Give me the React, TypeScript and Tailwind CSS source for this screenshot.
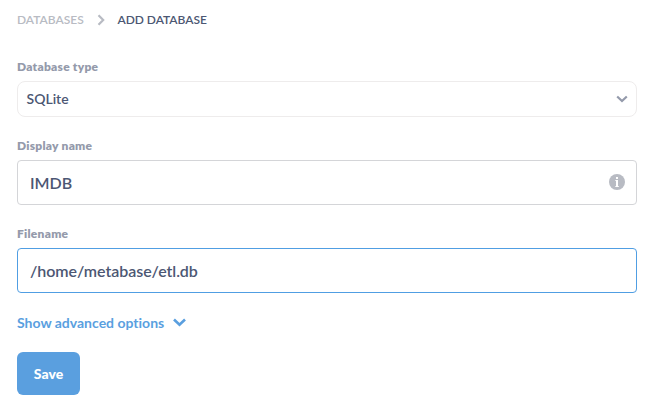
import React from "react";

function Label({ children }: { children: React.ReactNode }) {
  return <div className="text-[12px] leading-[14px] font-extrabold tracking-[0.25px] text-[#949aab]">{children}</div>;
}

export default function App() {
  return (
    <main className="h-[407px] w-[648px] overflow-hidden bg-white pl-[17px] pr-[11px] pt-[13px] font-['Lato',sans-serif] font-semibold text-[#4c5773] [font-variant-ligatures:none]">
      <nav className="flex h-[14px] items-center text-[12px] leading-[14px]">
        <span className="w-[67px] whitespace-nowrap text-[#b8bbc3]">DATABASES</span>
        <svg className="ml-[13px] mr-[12.5px]" width="8" height="12" viewBox="0 0 8 12" fill="none" stroke="#b8bbc3" strokeWidth="2.2">
          <path d="M1.5 1.2 6.2 6 1.5 10.8" />
        </svg>
        <span className="tracking-[-0.03px]">ADD DATABASE</span>
      </nav>
      <div className="mt-[33px]">
        <Label>Database type</Label>
      </div>
      <div className="mt-[7px] flex h-[36px] items-center justify-between rounded-[8px] border border-[#eeecec] pl-[8.5px] pr-[8px] text-[14px]">
        <span className="leading-[17px] -mt-[1px]">SQLite</span>
        <svg width="12" height="8" viewBox="0 0 12 8" fill="none" stroke="#949aab" strokeWidth="2.2">
          <path d="M1.2 1.5 6 6 10.8 1.5" />
        </svg>
      </div>
      <div className="mt-[22px]">
        <Label>Display name</Label>
      </div>
      <div className="mt-[7px] flex h-[45px] items-center justify-between rounded-[4px] border border-[#d4d5d8] pl-[12px] pr-[11px] text-[16px]">
        <span>IMDB</span>
        <svg className="-mt-[1px]" width="16" height="16" viewBox="0 0 16 16">
          <circle cx="8" cy="8" r="8" fill="#b8bbc3" />
          <path d="M7 3h2v2H7zM6.3 6H9v6h.8v1H6.3v-1H7V7h-.7z" fill="white" />
        </svg>
      </div>
      <div className="mt-[22px]">
        <Label>Filename</Label>
      </div>
      <div className="mt-[7px] flex h-[45px] items-center rounded-[4px] border border-[#509ee3] pl-[12px] text-[16px] tracking-[-0.05px]">/home/metabase/etl.db</div>
      <button className="mt-[21px] flex h-[17px] items-center text-[14px] font-bold leading-[17px] text-[#5a9fdf]">
        Show advanced options
        <svg className="-mt-[1px] ml-[8.5px]" width="13" height="9" viewBox="0 0 13 9" fill="none" stroke="#5a9fdf" strokeWidth="2.6">
          <path d="M1 1.5 6.5 6.7 12 1.5" />
        </svg>
      </button>
      <button className="mt-[21px] flex h-[43px] w-[63px] items-center justify-center rounded-[6px] bg-[#5a9fdf] text-[14px] font-black text-white">Save</button>
    </main>
  );
}
